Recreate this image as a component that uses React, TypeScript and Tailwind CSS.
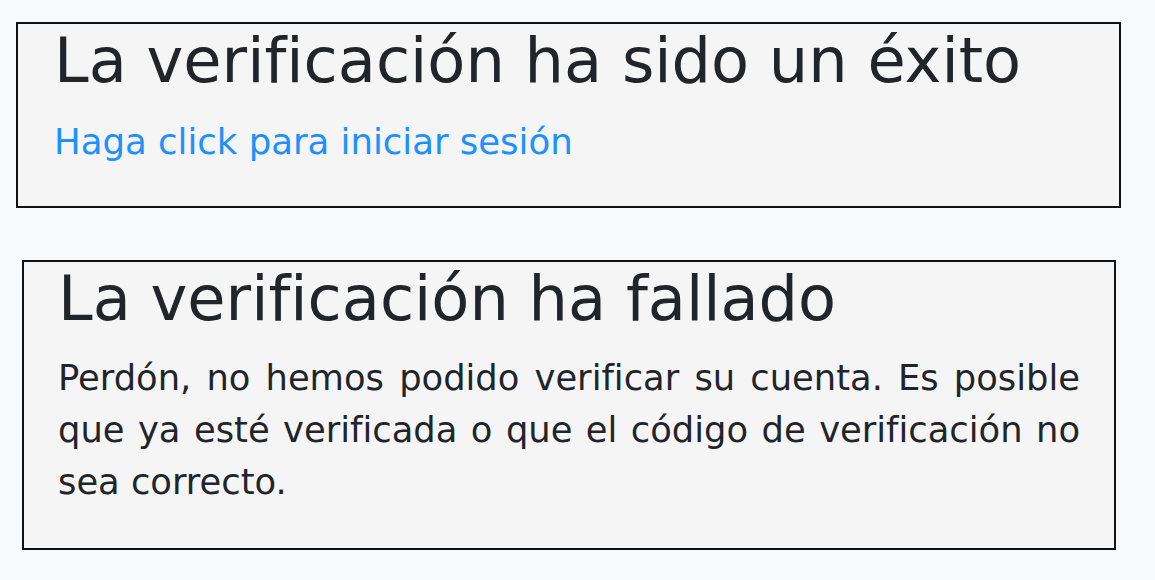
import React from "react";

const font = { fontFamily: '"DejaVu Sans", Verdana, sans-serif' };

const Box = ({ children, className = "" }: { children: React.ReactNode; className?: string }) => (
  <div className={`border-2 border-[#111] bg-[#f5f5f5] [font-variant-ligatures:none] ${className}`}>{children}</div>
);

export default function App() {
  return (
    <div className="min-h-[580px] w-[1155px] bg-[#f8f9fa] pt-[22px] text-[#212529]" style={font}>
      <Box className="ml-[16px] w-[1105px] pl-[36px] pr-[31px] pb-[38px]">
        <h1 className="text-[62.2px] leading-[1.2] font-normal mb-[17px]">La verificación ha sido un éxito</h1>
        <a href="#" className="block text-[35.5px] leading-[52px] text-[#1e90ff]">
          Haga click para iniciar sesión
        </a>
      </Box>
      <Box className="ml-[22px] mt-[52px] w-[1094px] pl-[34px] pr-[34px] pb-[40px]">
        <h1 className="text-[62.2px] leading-[1.2] font-normal mb-[16px]">La verificación ha fallado</h1>
        <p className="text-[35.3px] leading-[52px] text-justify">
          Perdón, no hemos podido verificar su cuenta. Es posible que ya esté verificada o que el código de
          verificación no sea correcto.
        </p>
      </Box>
    </div>
  );
}
